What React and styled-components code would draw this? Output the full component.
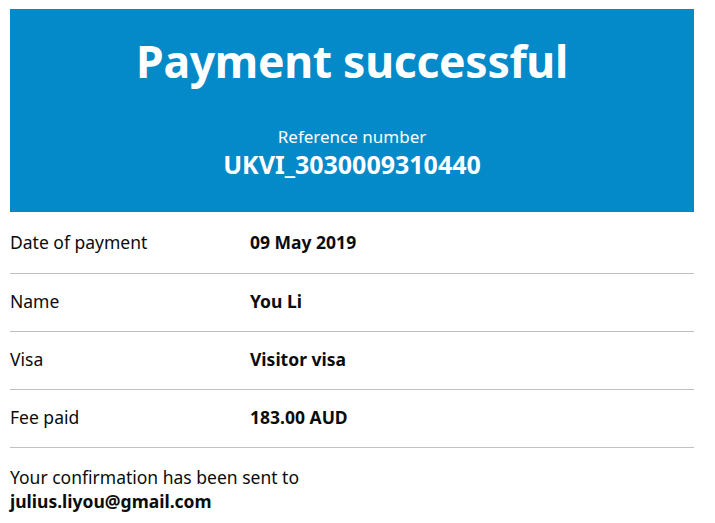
import React from "react";
import styled, { createGlobalStyle } from "styled-components";

const GlobalStyle = createGlobalStyle`
	body {
		margin: 0;
		padding: 9px 21px 0 10px;
		background: #ffffff;
		font-family: "Noto Sans", "Liberation Sans", sans-serif;
		color: #0b0c0c;
	}
`;

const Page = styled.main`
	width: 684px;
`;

const Panel = styled.section`
	background: #058ac9;
	color: #ffffff;
	text-align: center;
	padding: 25px 20px 33px;
`;

const Title = styled.h1`
	margin: 0 0 37px;
	font-size: 44.5px;
	line-height: 54px;
	font-weight: 700;
	letter-spacing: -0.3px;
`;

const RefLabel = styled.div`
	font-size: 17px;
	line-height: 24px;
`;

const RefNumber = styled.div`
	font-size: 25px;
	line-height: 30px;
	font-weight: 700;
`;

const List = styled.dl`
	margin: 0;
`;

const Row = styled.div`
	display: grid;
	grid-template-columns: 240px 1fr;
	align-items: center;
	height: 58px;
	padding-bottom: 4px;
	border-bottom: 1px solid #bfc1c3;
	box-sizing: border-box;
	font-size: 17.5px;

	&:first-child {
		height: 62px;
		padding-bottom: 2px;
	}
`;

const Key = styled.dt`
	margin: 0;
`;

const Value = styled.dd`
	margin: 0;
	font-weight: 700;
`;

const Note = styled.p`
	margin: 17px 0 0;
	font-size: 17.5px;
	line-height: 24px;
`;

const rows = [
	["Date of payment", "09 May 2019"],
	["Name", "You Li"],
	["Visa", "Visitor visa"],
	["Fee paid", "183.00 AUD"],
];

export default function App() {
	return (
		<>
			<GlobalStyle />
			<Page>
				<Panel>
					<Title>Payment successful</Title>
					<RefLabel>Reference number</RefLabel>
					<RefNumber>UKVI_3030009310440</RefNumber>
				</Panel>
				<List>
					{rows.map(([k, v]) => (
						<Row key={k}>
							<Key>{k}</Key>
							<Value>{v}</Value>
						</Row>
					))}
				</List>
				<Note>
					Your confirmation has been sent to
					<br />
					<strong>julius.liyou@gmail.com</strong>
				</Note>
			</Page>
		</>
	);
}
